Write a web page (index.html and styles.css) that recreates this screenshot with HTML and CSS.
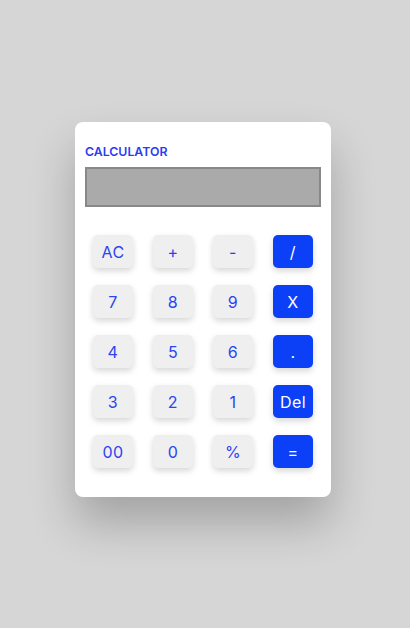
FILE: index.html
```html
<!DOCTYPE html>
<html>
<head>
<meta charset="utf-8">
<link rel="stylesheet" href="styles.css">
</head>
<body>
<div class="calc">
  <div class="title">CALCULATOR</div>
  <div class="display"></div>
  <div class="keys">
    <button class="key">AC</button>
    <button class="key">+</button>
    <button class="key">-</button>
    <button class="key op">/</button>
    <button class="key">7</button>
    <button class="key">8</button>
    <button class="key">9</button>
    <button class="key op">X</button>
    <button class="key">4</button>
    <button class="key">5</button>
    <button class="key">6</button>
    <button class="key op">.</button>
    <button class="key">3</button>
    <button class="key">2</button>
    <button class="key">1</button>
    <button class="key op">Del</button>
    <button class="key">00</button>
    <button class="key">0</button>
    <button class="key">%</button>
    <button class="key op">=</button>
  </div>
</div>
</body>
</html>
```
FILE: styles.css
```css
html, body {
  margin: 0;
  height: 100%;
}
body {
  background: #d6d6d6;
  padding: 122px 0 0 75px;
  box-sizing: border-box;
  font-family: "Inter", "Noto Sans", sans-serif;
}
.calc {
  width: 256px;
  height: 375px;
  box-sizing: border-box;
  background: #fff;
  border-radius: 8px;
  padding: 22px 10px 0 10px;
  box-shadow: 0 26px 46px rgba(0, 0, 0, 0.24);
}
.title {
  color: #2b3cf2;
  font-size: 12.3px;
  font-weight: 600;
  line-height: 14px;
  height: 14px;
  margin-top: 1px;
  margin-bottom: -1px;
}
.display {
  margin-top: 9px;
  height: 40px;
  box-sizing: border-box;
  background: #aaaaaa;
  border: 2px solid #888888;
}
.keys {
  margin-top: 28px;
  display: grid;
  grid-template-columns: repeat(4, 40px);
  grid-auto-rows: 33px;
  column-gap: 20px;
  row-gap: 17px;
  justify-content: center;
}
.key {
  border: none;
  border-radius: 5px;
  background: #efefef;
  color: #2b44f2;
  font-family: inherit;
  font-size: 16px;
  font-weight: 400;
  letter-spacing: 0.5px;
  padding: 0;
  box-shadow: 0 3px 6px rgba(0, 0, 0, 0.16);
}
.key.op {
  background: #0c40f6;
  color: #fff;
}
```
